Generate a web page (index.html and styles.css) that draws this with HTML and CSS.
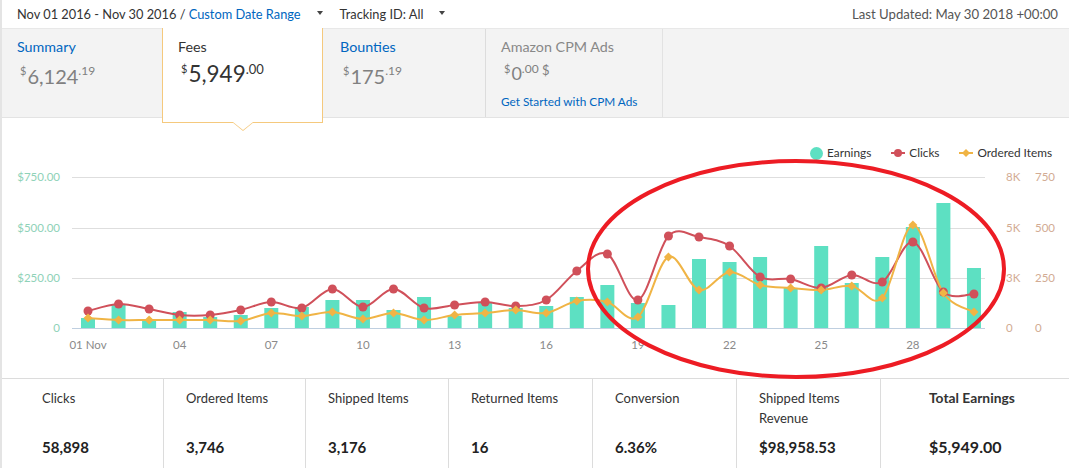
FILE: index.html
```html
<!DOCTYPE html>
<html>
<head>
<meta charset="utf-8">
<link rel="stylesheet" href="styles.css">
</head>
<body>
<div class="page">
  <div class="topbar">
    <span class="range">Nov 01 2016 - Nov 30 2016 / <a class="link">Custom Date Range</a></span>
    <span class="caret"></span>
    <span class="tracking">Tracking ID: All</span>
    <span class="caret"></span>
    <span class="updated">Last Updated: May 30 2018 +00:00</span>
  </div>

  <div class="tabs">
    <div class="tab tab-summary">
      <div class="tab-title link">Summary</div>
      <div class="amount"><span class="cur">$</span>6,124<span class="cents">.19</span></div>
    </div>
    <div class="tab tab-fees">
      <div class="tab-title">Fees</div>
      <div class="amount"><span class="cur">$</span>5,949<span class="cents">.00</span></div>
    </div>
    <div class="tab tab-bounties">
      <div class="tab-title link">Bounties</div>
      <div class="amount"><span class="cur">$</span>175<span class="cents">.19</span></div>
    </div>
    <div class="tab tab-cpm">
      <div class="tab-title muted">Amazon CPM Ads</div>
      <div class="amount small"><span class="cur">$</span>0<span class="cents">.00</span><span class="tail"> $</span></div>
      <div class="cpm-link link">Get Started with CPM Ads</div>
    </div>
    <div class="tab-rest"></div>
  </div>

  <div class="chart">
    <div class="legend">
      <span class="lg-item"><span class="lg-dot"></span>Earnings</span>
      <span class="lg-item"><svg class="lg-mark" width="14" height="10" viewBox="0 0 14 10"><line x1="0" y1="5" x2="14" y2="5" stroke="#d0505a" stroke-width="2"/><circle cx="7" cy="5" r="4" fill="#d0505a"/></svg>Clicks</span>
      <span class="lg-item"><svg class="lg-mark" width="14" height="10" viewBox="0 0 14 10"><line x1="0" y1="5" x2="14" y2="5" stroke="#f0b445" stroke-width="2"/><polygon points="7,1 11,5 7,9 3,5" fill="#f0b445"/></svg>Ordered Items</span>
    </div>
    <svg id="plot" class="plot" width="1067" height="210" viewBox="0 0 1067 210"></svg>
  </div>

  <div class="stats">
    <div class="stat"><div class="label">Clicks</div><div class="value">58,898</div></div>
    <div class="stat"><div class="label">Ordered Items</div><div class="value">3,746</div></div>
    <div class="stat"><div class="label">Shipped Items</div><div class="value">3,176</div></div>
    <div class="stat"><div class="label">Returned Items</div><div class="value">16</div></div>
    <div class="stat"><div class="label">Conversion</div><div class="value">6.36%</div></div>
    <div class="stat"><div class="label">Shipped Items Revenue</div><div class="value">$98,958.53</div></div>
    <div class="stat total"><div class="label">Total Earnings</div><div class="value">$5,949.00</div></div>
  </div>

  <svg class="annotation" width="1069" height="468" viewBox="0 0 1069 468">
    <ellipse cx="796" cy="269" rx="208" ry="108" fill="none" stroke="#ed1c24" stroke-width="4"/>
  </svg>
</div>
<script src="script.js"></script>
</body>
</html>
```

FILE: styles.css
```css
* { box-sizing: border-box; }
html, body { margin: 0; padding: 0; }
body {
  width: 1069px;
  height: 468px;
  overflow: hidden;
  background: #fff;
  color: #333;
  font-family: Lato, "Noto Sans", "Liberation Sans", sans-serif;
}
.page {
  position: relative;
  height: 468px;
  border-left: 2px solid #e4e4e4;
}
.link { color: #0066c0; text-decoration: none; }
.muted { color: #888; }

.topbar {
  height: 28px;
  display: flex;
  align-items: center;
  padding: 0 11px 0 15px;
  font-size: 12.8px;
  color: #333;
}
.caret {
  width: 0;
  height: 0;
  border-left: 3.5px solid transparent;
  border-right: 3.5px solid transparent;
  border-top: 4px solid #444;
  margin: 0 17px 3px 16px;
}
.updated { margin-left: auto; color: #555; font-size: 13.2px; }

.tabs {
  display: flex;
  align-items: flex-start;
  height: 90px;
  background: #f3f3f3;
  border-top: 1px solid #e8e8e8;
  border-bottom: 1px solid #e3e3e3;
}
.tab {
  height: 88px;
  padding: 9px 15px 0 15px;
}
.tab-summary { width: 160px; }
.tab-fees {
  position: relative;
  z-index: 2;
  width: 161px;
  height: 95px;
  margin-top: -1px;
  padding-top: 10px;
  background: #fff;
  border: 1px solid #f5c97d;
  border-top: none;
}
.tab-fees::before,
.tab-fees::after {
  content: "";
  position: absolute;
  left: 50%;
  width: 0;
  height: 0;
}
.tab-fees::before {
  top: 100%;
  margin-left: -11px;
  border-left: 11px solid transparent;
  border-right: 11px solid transparent;
  border-top: 9px solid #f5c97d;
}
.tab-fees::after {
  top: 100%;
  margin-left: -10px;
  border-left: 10px solid transparent;
  border-right: 10px solid transparent;
  border-top: 8px solid #fff;
}
.tab-bounties { width: 162px; padding-left: 17px; }
.tab-cpm {
  width: 178px;
  height: 88px;
  padding-left: 15px;
  border-left: 1px solid #dcdcdc;
  border-right: 1px solid #e2e2e2;
}
.tab-rest { flex: 1; }

.tab-title {
  font-size: 14.3px;
  line-height: 18px;
}
.amount {
  margin-top: 8px;
  padding-left: 3px;
  font-size: 20px;
  line-height: 24px;
  color: #808080;
  white-space: nowrap;
}
.tab-fees .amount { color: #333; font-size: 22.5px; margin-top: 6px; }
.cur {
  font-size: 11px;
  vertical-align: top;
  line-height: 14px;
  margin-right: 1px;
}
.cents {
  font-size: 12px;
  vertical-align: top;
  line-height: 14px;
}
.tab-fees .cents { font-size: 13px; }
.amount.small { font-size: 18px; line-height: 22px; margin-top: 6px; }
.tail { font-size: 13px; vertical-align: top; line-height: 16px; }
.cpm-link { margin-top: 10px; font-size: 11.8px; line-height: 16px; }

.chart { height: 260px; display: flex; flex-direction: column; }
.legend {
  height: 50px;
  padding: 20px 17px 0 0;
  display: flex;
  justify-content: flex-end;
  gap: 20px;
  font-size: 11.8px;
  line-height: 16px;
  color: #333;
}
.lg-item { display: flex; align-items: center; }
.lg-dot {
  width: 13px;
  height: 13px;
  border-radius: 50%;
  background: #5de0c2;
  margin-right: 4px;
}
.lg-mark { margin-right: 4px; }
.plot { display: block; }
.plot text { font-family: Lato, "Noto Sans", sans-serif; font-size: 11.5px; }

.stats {
  height: 90px;
  display: grid;
  grid-template-columns: 161px 142px 143px 144px 144px 144px 1fr;
  border-top: 1px solid #dcdcdc;
}
.stat {
  border-left: 1px solid #dcdcdc;
  padding: 9px 10px 0 22px;
}
.stat:first-child { border-left: none; padding-left: 40px; }
.stat.total { padding-left: 48px; }
.label {
  height: 40px;
  margin-bottom: 9px;
  font-size: 13px;
  line-height: 20px;
  color: #333;
}
.total .label { font-weight: bold; font-size: 13.8px; }
.value {
  font-size: 15px;
  line-height: 20px;
  font-weight: bold;
  color: #222;
}
.total .value { font-size: 16px; }

.annotation {
  position: absolute;
  left: -2px;
  top: 0;
  pointer-events: none;
  z-index: 5;
}
```

FILE: script.js
```js
(function () {
  var NS = 'http://www.w3.org/2000/svg';
  var svg = document.getElementById('plot');
  var OX = 2, OY = 168;
  var BASE = 328;
  function X(i) { return 88 + i * 30.55 - OX; }
  function Y(y) { return y - OY; }
  function el(tag, attrs, text) {
    var e = document.createElementNS(NS, tag);
    for (var k in attrs) e.setAttribute(k, attrs[k]);
    if (text != null) e.textContent = text;
    svg.appendChild(e);
    return e;
  }
  var bars = [318,305,320,312,317,315,308,307,300,300,310,297,316,302,308,306,297,285,303,305,259,262,257,288,246,283,257,227,203,268];
  var red = [311,304,309,315,315,310,302,308,289,307,289,308,305,302,306,300,271,254,300,236,237,246,277,279,288,275,282,242,292,294];
  var orange = [318,320,320,320,320,321,313,316,312,319,313,320,315,313,310,313,301,302,317,257,290,272,285,288,290,286,298,225,293,312];

  [177, 228, 278].forEach(function (y) {
    el('line', { x1: 72 - OX, x2: 985 - OX, y1: Y(y) + 0.5, y2: Y(y) + 0.5, stroke: '#dedede', 'stroke-width': 1 });
  });
  var left = [['$750.00', 177], ['$500.00', 228], ['$250.00', 278], ['0', 328]];
  left.forEach(function (l) {
    el('text', { x: 60 - OX, y: Y(l[1]) + 4, 'text-anchor': 'end', fill: '#8fd2b8' }, l[0]);
  });
  var r1 = [['8K', 177], ['5K', 228], ['3K', 278], ['0', 328]];
  r1.forEach(function (l) {
    el('text', { x: 1006 - OX, y: Y(l[1]) + 4, fill: '#d2ab93' }, l[0]);
  });
  var r2 = [['750', 177], ['500', 228], ['250', 278], ['0', 328]];
  r2.forEach(function (l) {
    el('text', { x: 1035 - OX, y: Y(l[1]) + 4, fill: '#d2ab93' }, l[0]);
  });
  var xl = ['01 Nov', '04', '07', '10', '13', '16', '19', '22', '25', '28'];
  xl.forEach(function (t, k) {
    el('text', { x: X(k * 3), y: Y(349), 'text-anchor': 'middle', fill: '#8a8a8a' }, t);
  });
  bars.forEach(function (top, i) {
    el('rect', { x: X(i) - 7, y: Y(top), width: 14, height: BASE - top, fill: '#5de0c2' });
  });
  el('line', { x1: 72 - OX, x2: 985 - OX, y1: Y(BASE) + 0.5, y2: Y(BASE) + 0.5, stroke: '#bfcfe0', 'stroke-width': 1 });

  function spline(vals) {
    var p = vals.map(function (v, i) { return [X(i), Y(v)]; });
    var d = 'M' + p[0][0].toFixed(2) + ',' + p[0][1].toFixed(2);
    for (var i = 0; i < p.length - 1; i++) {
      var p0 = p[i - 1] || p[i], p1 = p[i], p2 = p[i + 1], p3 = p[i + 2] || p[i + 1];
      var c1x = p1[0] + (p2[0] - p0[0]) / 6, c1y = p1[1] + (p2[1] - p0[1]) / 6;
      var c2x = p2[0] - (p3[0] - p1[0]) / 6, c2y = p2[1] - (p3[1] - p1[1]) / 6;
      d += ' C' + c1x.toFixed(2) + ',' + c1y.toFixed(2) + ' ' + c2x.toFixed(2) + ',' + c2y.toFixed(2) + ' ' + p2[0].toFixed(2) + ',' + p2[1].toFixed(2);
    }
    return d;
  }
  el('path', { d: spline(red), fill: 'none', stroke: '#d0505a', 'stroke-width': 2 });
  el('path', { d: spline(orange), fill: 'none', stroke: '#f0b445', 'stroke-width': 2 });
  red.forEach(function (v, i) {
    el('circle', { cx: X(i), cy: Y(v), r: 4.5, fill: '#d0505a' });
  });
  orange.forEach(function (v, i) {
    var x = X(i), y = Y(v), s = 4.5;
    el('polygon', { points: [x, y - s, x + s, y, x, y + s, x - s, y].join(' ').replace(/(\S+) (\S+)/g, '$1,$2'), fill: '#f0b445' });
  });
})();
```
